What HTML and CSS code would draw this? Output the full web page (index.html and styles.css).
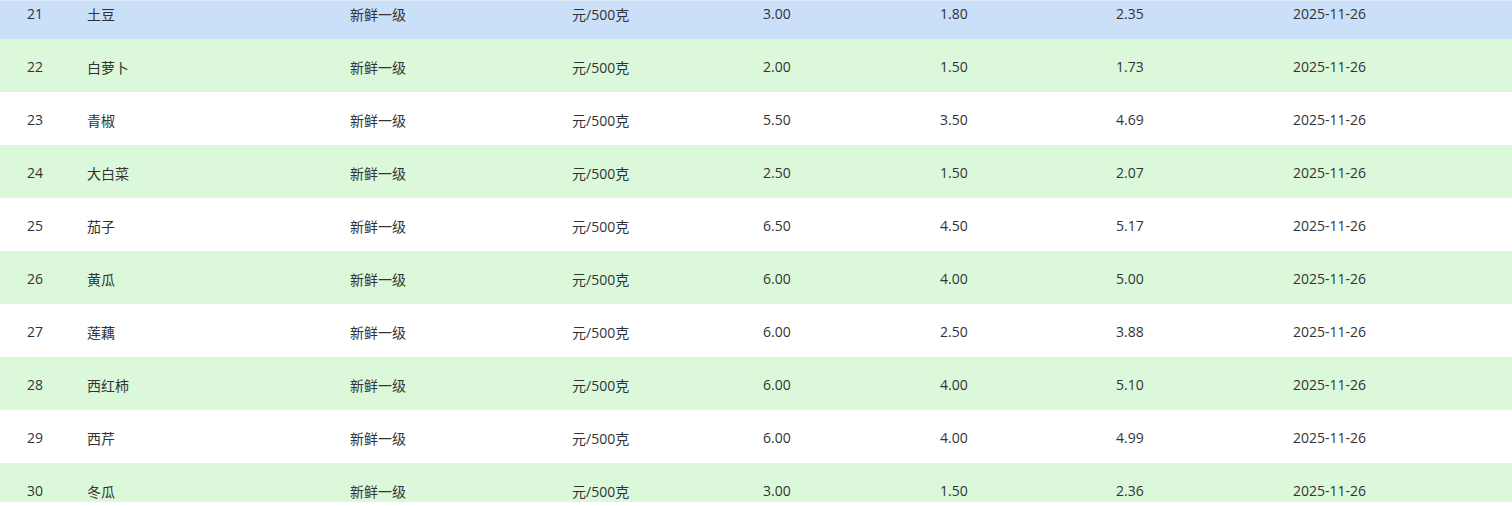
FILE: index.html
```html
<!DOCTYPE html>
<html lang="zh-CN">
<head>
<meta charset="utf-8">
<title>蔬菜价格</title>
<link rel="stylesheet" href="styles.css">
</head>
<body>
<div class="wrap">
  <table class="price-table">
    <colgroup>
      <col class="c-id"><col class="c-name"><col class="c-grade"><col class="c-unit">
      <col class="c-p"><col class="c-p2"><col class="c-p3"><col class="c-date">
    </colgroup>
    <tbody>
      <tr class="row hover"><td class="id">21</td><td>土豆</td><td>新鲜一级</td><td>元/500克</td><td>3.00</td><td>1.80</td><td>2.35</td><td>2025-11-26</td></tr>
      <tr class="row alt"><td class="id">22</td><td>白萝卜</td><td>新鲜一级</td><td>元/500克</td><td>2.00</td><td>1.50</td><td>1.73</td><td>2025-11-26</td></tr>
      <tr class="row"><td class="id">23</td><td>青椒</td><td>新鲜一级</td><td>元/500克</td><td>5.50</td><td>3.50</td><td>4.69</td><td>2025-11-26</td></tr>
      <tr class="row alt"><td class="id">24</td><td>大白菜</td><td>新鲜一级</td><td>元/500克</td><td>2.50</td><td>1.50</td><td>2.07</td><td>2025-11-26</td></tr>
      <tr class="row"><td class="id">25</td><td>茄子</td><td>新鲜一级</td><td>元/500克</td><td>6.50</td><td>4.50</td><td>5.17</td><td>2025-11-26</td></tr>
      <tr class="row alt"><td class="id">26</td><td>黄瓜</td><td>新鲜一级</td><td>元/500克</td><td>6.00</td><td>4.00</td><td>5.00</td><td>2025-11-26</td></tr>
      <tr class="row"><td class="id">27</td><td>莲藕</td><td>新鲜一级</td><td>元/500克</td><td>6.00</td><td>2.50</td><td>3.88</td><td>2025-11-26</td></tr>
      <tr class="row alt"><td class="id">28</td><td>西红柿</td><td>新鲜一级</td><td>元/500克</td><td>6.00</td><td>4.00</td><td>5.10</td><td>2025-11-26</td></tr>
      <tr class="row"><td class="id">29</td><td>西芹</td><td>新鲜一级</td><td>元/500克</td><td>6.00</td><td>4.00</td><td>4.99</td><td>2025-11-26</td></tr>
      <tr class="row alt"><td class="id">30</td><td>冬瓜</td><td>新鲜一级</td><td>元/500克</td><td>3.00</td><td>1.50</td><td>2.36</td><td>2025-11-26</td></tr>
    </tbody>
  </table>
</div>
</body>
</html>
```

FILE: styles.css
```css
html, body {
  margin: 0;
  padding: 0;
  background: #ffffff;
}
body {
  font-family: "Open Sans", "Noto Sans CJK SC", sans-serif;
  font-size: 14px;
  color: #333333;
}
.wrap {
  height: 501px;
  overflow: hidden;
  border-top: 1px solid #dde9f8;
}
.price-table {
  width: 100%;
  border-collapse: collapse;
  table-layout: fixed;
  margin-top: -15px;
}
.c-id { width: 87px; }
.c-name { width: 263px; }
.c-grade { width: 222px; }
.c-unit { width: 191px; }
.c-p { width: 177px; }
.c-p2 { width: 176px; }
.c-p3 { width: 177px; }
.c-date { width: 219px; }
.row { height: 53px; }
.row td {
  padding: 2px 0 0 0;
  text-align: left;
  vertical-align: middle;
  white-space: nowrap;
}
.row td.id { padding-left: 27px; }
.row.alt { background: #dbf9da; }
.row.hover { background: #cadff8; }
```
